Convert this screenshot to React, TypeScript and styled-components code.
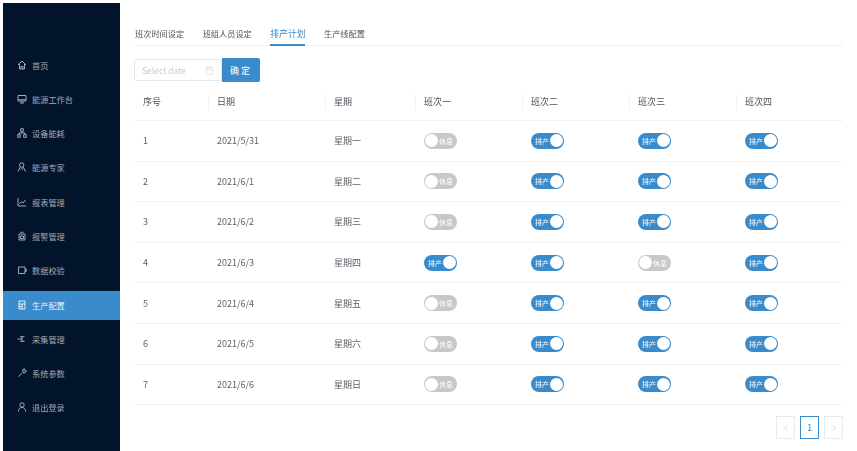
import React from "react";
import styled, { createGlobalStyle } from "styled-components";
import { Calendar, ChevronLeft, ChevronRight } from "lucide-react";

const Global = createGlobalStyle`
  html, body { margin: 0; padding: 0; background: #fff; }
  body { font-family: "Noto Sans CJK SC", "Liberation Sans", sans-serif; width: 857px; height: 451px; overflow: hidden; }
`;
const Page = styled.div`
  display: flex; width: 857px; height: 451px; padding: 3px 0 0 3px; box-sizing: border-box; filter: blur(0.5px);
`;
const Sidebar = styled.nav`
  width: 117px; height: 448px; flex: none; background: #02142c; padding-top: 48px; box-sizing: border-box;
  display: flex; flex-direction: column;
`;
const NavItem = styled.div<{ $active?: boolean }>`
  height: 29px; margin-bottom: 5.3px; display: flex; align-items: center; gap: 5px; padding: 0 0 2px 14px; box-sizing: border-box;
  font-size: 8.2px; color: ${p => (p.$active ? "#e6f0f8" : "#a0aab6")};
  background: ${p => (p.$active ? "#3a8bcb" : "transparent")};
`;
const NavIcon = styled.svg`
  width: 10px; height: 10px; flex: none; fill: none; stroke: currentColor; stroke-width: 1;
`;
const Main = styled.main`
  flex: 1; padding: 0 14px 0 14px; min-width: 0; display: flex; flex-direction: column;
`;
const Tabs = styled.div`
  height: 43px; border-bottom: 1px solid #eef0f2; display: flex; gap: 18.5px; align-items: flex-end; box-sizing: border-box; padding-left: 1px;
`;
const Tab = styled.div<{ $active?: boolean }>`
  font-size: ${p => (p.$active ? "8.8px" : "8.2px")}; height: 19px; line-height: 13px; box-sizing: border-box; white-space: nowrap;
  color: ${p => (p.$active ? "#3a8bcb" : "#4d545c")};
  border-bottom: 2px solid ${p => (p.$active ? "#3a8bcb" : "transparent")};
  margin-bottom: -1px;
`;
const Filter = styled.div`
  display: flex; margin-top: 12px; height: 24px; align-items: center;
`;
const DateBox = styled.div`
  width: 88px; height: 22px; box-sizing: border-box; border: 1px solid #e4e8ec; border-radius: 2px 0 0 2px; display: flex; align-items: center;
  justify-content: space-between; padding: 0 7px; font-size: 8.5px; color: #c4c8cc;
`;
const Confirm = styled.button`
  width: 38px; height: 24px; border: 0; padding: 0; background: #3a8bcb; color: #fff; font: inherit; font-size: 9px; letter-spacing: 2px; border-radius: 0 2px 2px 0;
`;
const Row = styled.div<{ $head?: boolean }>`
  display: grid; grid-template-columns: 74px 117px 90px 107px 107px 107px 107px;
  height: ${p => (p.$head ? "39px" : "40.6px")}; align-items: center;
  border-bottom: 1px solid #f0f2f4; box-sizing: border-box; font-size: 9px; color: ${p => (p.$head ? "#4d545c" : "#5c6268")};
`;
const Cell = styled.div<{ $sep?: boolean }>`
  padding-left: 9px; position: relative;
  ${p => p.$sep && `&::before { content: ""; position: absolute; left: 0; top: 0; height: 15px; width: 1px; background: #f0f2f4; }`}
`;
const Toggle = styled.div<{ $on?: boolean }>`
  width: 33px; height: 16px; border-radius: 8px; background: ${p => (p.$on ? "#3a8bcb" : "#c6c8ca")};
  display: flex; align-items: center; flex-direction: ${p => (p.$on ? "row" : "row-reverse")}; justify-content: space-between;
  padding: 0 1px; box-sizing: border-box; color: #fff; font-size: 7px; line-height: 16px; white-space: nowrap;
`;
const Knob = styled.span`
  width: 13px; height: 13px; border-radius: 50%; background: #fff; flex: none;
`;
const Label = styled.span<{ $on?: boolean }>`
  padding: ${p => (p.$on ? "0 0 0 3px" : "0 3px 0 0")};
`;
const Pager = styled.div`
  display: flex; justify-content: flex-end; gap: 5px; margin-top: 11px;
`;
const PageBtn = styled.div<{ $active?: boolean }>`
  width: 19px; height: 23px; box-sizing: border-box; border: 1px solid ${p => (p.$active ? "#3a8bcb" : "#e8eaec")};
  display: flex; align-items: center; justify-content: center; color: ${p => (p.$active ? "#3a8bcb" : "#c8ccd0")}; font-size: 9px; background: #fff;
`;

const navs: [string, string][] = [
  ["M1 5L5 1L9 5M2.5 4V9H7.5V4M4 9V6.5H6V9", "首页"],
  ["M1 1.5H9V7H1ZM1 5.8H9M3 9H7M5 7V9", "能源工作台"],
  ["M3.7 .7H6.3V3.3H3.7ZM.7 6.7H3.3V9.3H.7ZM6.7 6.7H9.3V9.3H6.7ZM5 3.3V5M2 6.7V5H8V6.7", "设备能耗"],
  ["M2.5 3A2.2 2.2 0 1 0 6.9 3A2.2 2.2 0 1 0 2.5 3M1 9.5L3.2 5M8.5 9.5L6.2 5M3.5 7.5L4.7 6.5L6 7.5", "能源专家"],
  ["M1 1V9H9M2.5 7L4.5 4.5L6 6L8.5 3", "报表管理"],
  ["M2 3H8V9H2ZM3.5 1.3H6.5M3.5 5H6.5V7.5H3.5Z", "报警管理"],
  ["M8 2H1.5V8.5H8ZM8 4H9.3V6.5H8", "数据校验"],
  ["M2 1H8V9H2ZM2 4H8M5 4V9M2 6.5H5", "生产配置"],
  ["M.5 5H5M3 2.7H7.5M3 7.3H7.5M5 2.7V7.3", "采集管理"],
  ["M1.5 8.7L5.7 4.5M5.5 2.5A2 2 0 0 1 8 1L6.8 2.5L7.8 3.5L9 2.3A2 2 0 0 1 6.8 5Z", "系统参数"],
  ["M2.8 3A2.2 2.2 0 1 0 7.2 3A2.2 2.2 0 1 0 2.8 3M1.5 9.5C1.5 6.5 3 5.5 5 5.5S8.5 6.5 8.5 9.5", "退出登录"],
];
const rows: [string, string, boolean[]][] = [
  ["2021/5/31", "星期一", [false, true, true, true]],
  ["2021/6/1", "星期二", [false, true, true, true]],
  ["2021/6/2", "星期三", [false, true, true, true]],
  ["2021/6/3", "星期四", [true, true, false, true]],
  ["2021/6/4", "星期五", [false, true, true, true]],
  ["2021/6/5", "星期六", [false, true, true, true]],
  ["2021/6/6", "星期日", [false, true, true, true]],
];
const heads = ["序号", "日期", "星期", "班次一", "班次二", "班次三", "班次四"];

export default function App() {
  return (
    <Page>
      <Global />
      <Sidebar>
        {navs.map(([d, t]) => (
          <NavItem key={t} $active={t === "生产配置"}>
            <NavIcon viewBox="0 0 10 10"><path d={d} /></NavIcon>
            <span>{t}</span>
          </NavItem>
        ))}
      </Sidebar>
      <Main>
        <Tabs>
          <Tab>班次时间设定</Tab>
          <Tab>班组人员设定</Tab>
          <Tab $active>排产计划</Tab>
          <Tab>生产线配置</Tab>
        </Tabs>
        <Filter>
          <DateBox>Select date<Calendar size={9} strokeWidth={1.2} /></DateBox>
          <Confirm>确定</Confirm>
        </Filter>
        <Row $head>
          {heads.map((h, i) => <Cell key={h} $sep={i > 0}>{h}</Cell>)}
        </Row>
        {rows.map((r, i) => (
          <Row key={r[0]}>
            <Cell>{i + 1}</Cell>
            <Cell>{r[0]}</Cell>
            <Cell>{r[1]}</Cell>
            {r[2].map((on, j) => (
              <Cell key={j}>
                <Toggle $on={on}><Label $on={on}>{on ? "排产" : "休息"}</Label><Knob /></Toggle>
              </Cell>
            ))}
          </Row>
        ))}
        <Pager>
          <PageBtn><ChevronLeft size={10} /></PageBtn>
          <PageBtn $active>1</PageBtn>
          <PageBtn><ChevronRight size={10} /></PageBtn>
        </Pager>
      </Main>
    </Page>
  );
}
